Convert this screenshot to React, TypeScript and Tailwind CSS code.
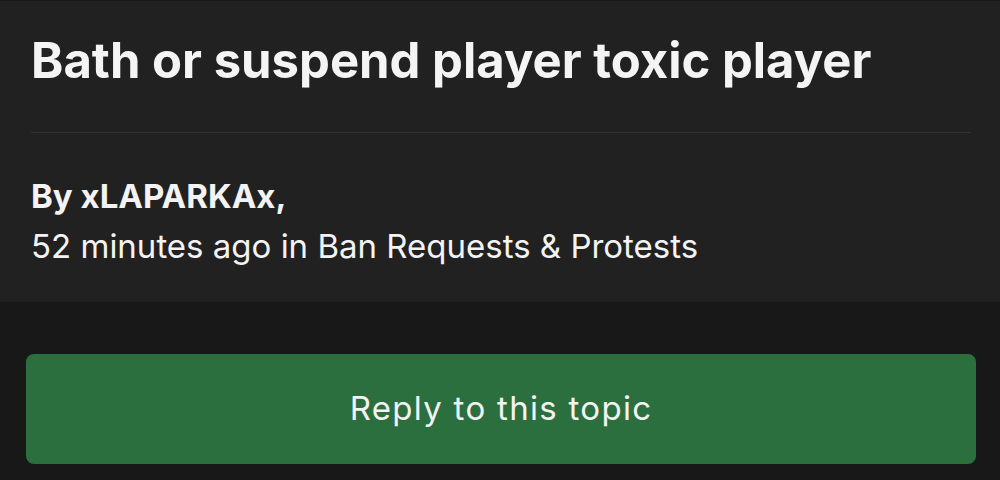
export default function App() {
  return (
    <div className="min-h-[480px] bg-[#181818] text-[#f3f3f3]" style={{ fontFamily: "Inter, 'Noto Sans', sans-serif" }}>
      <div className="bg-[#212121] border-t border-[#1a1a1a] pl-[31px] pr-[29px] pt-[28px] pb-[31px]">
        <h1 className="text-[49px] font-bold leading-[64px] text-[#f4f4f4]">
          Bath or suspend player toxic player
        </h1>
        <div className="mt-[39px] h-px bg-[#333333]" />
        <div className="mt-[38px] text-[33px] leading-[50px]">
          <div className="font-bold">By xLAPARKAx,</div>
          <div>52 minutes ago in Ban Requests &amp; Protests</div>
        </div>
      </div>
      <div className="pl-[26px] pr-[24px] pt-[52px] pb-4">
        <button className="w-full h-[110px] rounded-lg bg-[#2c6f3f] text-[33px] tracking-[1.3px] text-[#f3f3f3]">
          Reply to this topic
        </button>
      </div>
    </div>
  );
}
